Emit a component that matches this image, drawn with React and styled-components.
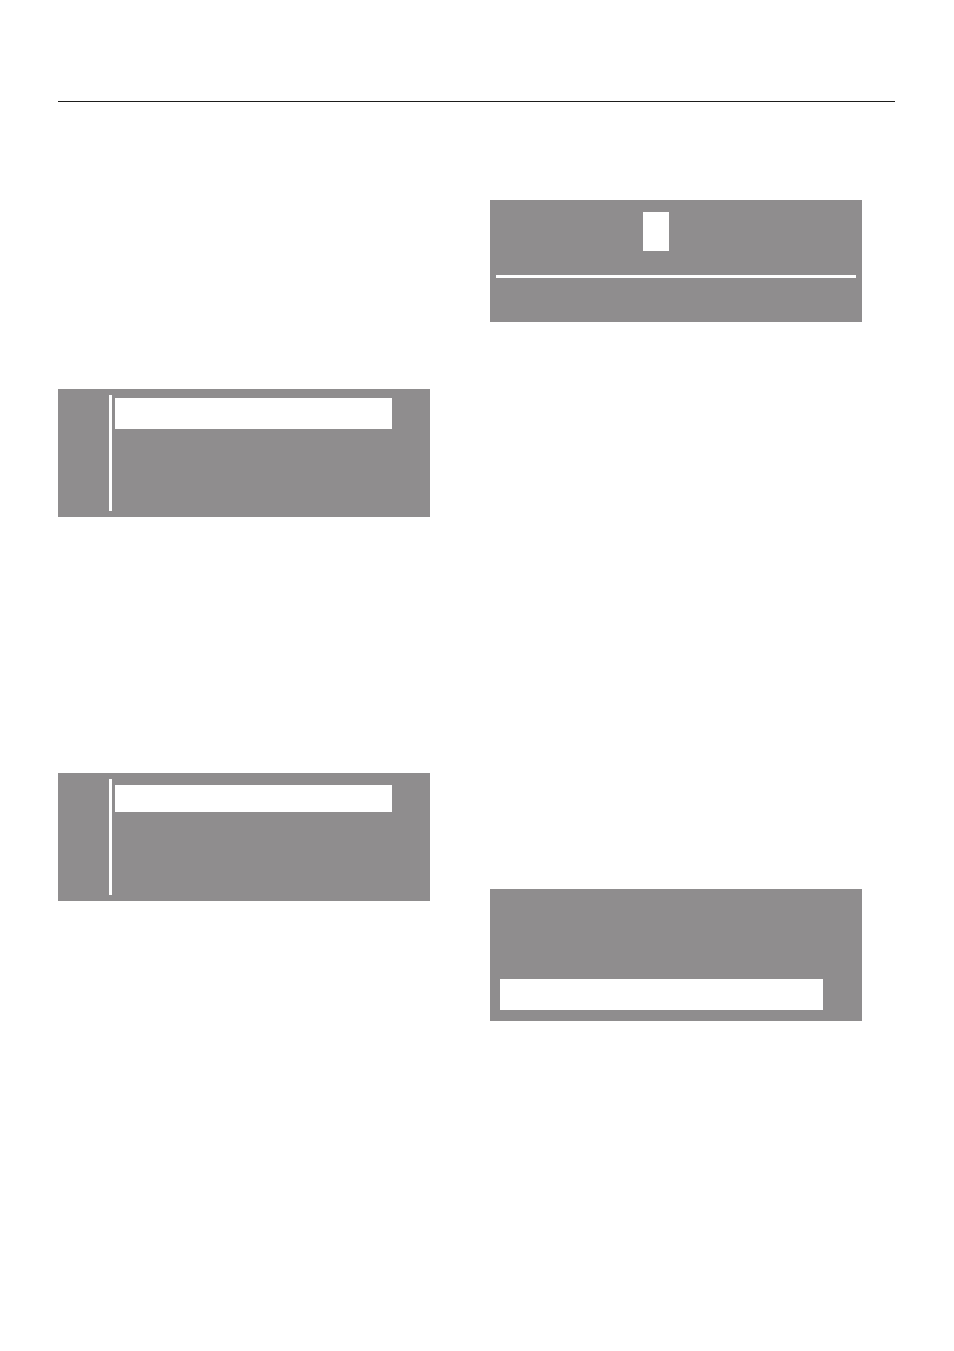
import React from 'react';
import styled, { createGlobalStyle } from 'styled-components';

const GlobalStyle = createGlobalStyle`
  html, body {
    margin: 0;
    padding: 0;
    background: #ffffff;
    font-family: "Liberation Sans", Arial, sans-serif;
  }
`;

const Page = styled.div`
  width: 954px;
  min-height: 1351px;
  padding: 101px 0 0 58px;
  box-sizing: border-box;
`;

const Rule = styled.hr`
  width: 837px;
  height: 1px;
  margin: 0;
  border: none;
  background: #1d1d1b;
`;

const Columns = styled.div`
  display: grid;
  grid-template-columns: 372px 372px;
  column-gap: 60px;
  align-items: start;
`;

const Column = styled.div`
  display: flex;
  flex-direction: column;
  padding-top: ${(p) => p.$top}px;
  gap: ${(p) => p.$gap}px;
`;

const Display = styled.div`
  background: #8f8d8e;
  height: ${(p) => p.$h}px;
  box-sizing: border-box;
`;

/* list-style display: scroll bar on the left, highlighted row */
const MenuDisplay = styled(Display)`
  display: flex;
  padding: 6px 0 6px 51px;
`;

const ScrollBar = styled.div`
  width: 3px;
  background: #ffffff;
`;

const MenuList = styled.div`
  padding: ${(p) => p.$top}px 0 0 3px;
`;

const Highlight = styled.div`
  width: ${(p) => p.$w}px;
  height: ${(p) => p.$h}px;
  background: #ffffff;
`;

/* entry display: cursor block above an input line */
const EntryDisplay = styled(Display)`
  padding: 12px 6px 0;
  display: flex;
  flex-direction: column;
`;

const Cursor = styled.div`
  width: 26px;
  height: 39px;
  margin-left: 147px;
  background: #ffffff;
`;

const InputLine = styled.div`
  height: 3px;
  margin-top: 24px;
  background: #ffffff;
`;

/* message display: selection bar at the bottom */
const MessageDisplay = styled(Display)`
  display: flex;
  align-items: flex-end;
  padding: 0 0 11px 10px;
`;

const MenuBox = ({ top, rowH }) => (
  <MenuDisplay $h={128}>
    <ScrollBar />
    <MenuList $top={top}>
      <Highlight $w={277} $h={rowH} />
    </MenuList>
  </MenuDisplay>
);

const App = () => (
  <>
    <GlobalStyle />
    <Page>
      <Rule />
      <Columns>
        <Column $top={287} $gap={256}>
          <MenuBox top={3} rowH={31} />
          <MenuBox top={6} rowH={27} />
        </Column>
        <Column $top={98} $gap={567}>
          <EntryDisplay $h={122}>
            <Cursor />
            <InputLine />
          </EntryDisplay>
          <MessageDisplay $h={132}>
            <Highlight $w={323} $h={31} />
          </MessageDisplay>
        </Column>
      </Columns>
    </Page>
  </>
);

export default App;
